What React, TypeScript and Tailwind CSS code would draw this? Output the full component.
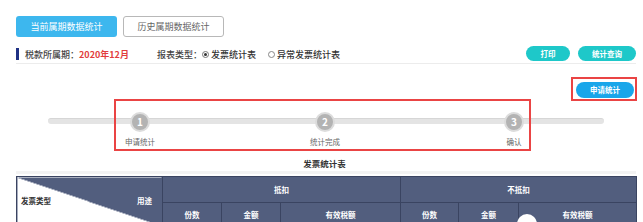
import React from "react";

const steps = [
  { n: 1, label: "申请统计", ml: "ml-[72px]" },
  { n: 2, label: "统计完成", ml: "ml-[145px]" },
  { n: 3, label: "确认", ml: "ml-[149px]" },
];

export default function App() {
  return (
    <div className="relative w-[643px] h-[222px] overflow-hidden bg-white font-['Noto_Sans_CJK_SC','Noto_Sans',sans-serif] text-[#333]">
      {/* Tabs */}
      <div className="flex gap-[6px] pl-[16px] pt-[16px]">
        <button className="w-[101px] h-[21px] rounded-[3px] bg-[#3db7ee] text-white text-[9px] leading-none">
          当前属期数据统计
        </button>
        <button className="w-[101px] h-[21px] rounded-[3px] border border-[#b8b8b8] bg-white text-[#666] text-[9px] leading-none">
          历史属期数据统计
        </button>
      </div>

      {/* Filter row */}
      <div className="mt-[8px] ml-[16px] mr-[7px] h-[19px] flex items-start border-b border-[#ececec] text-[9px] leading-[15px]">
        <span className="mt-[3px] w-[3px] h-[12px] bg-[#1f3184]" />
        <span className="ml-[6px] mt-[2px] font-medium text-[#444]">税款所属期：</span>
        <span className="mt-[2px] font-bold text-[#e23c3c]">2020年12月</span>
        <span className="ml-[28px] mt-[2px] font-medium text-[#444]">报表类型：</span>
        <span className="mt-[2px] flex items-center font-medium text-[#333]">
          <span className="w-[7px] h-[7px] rounded-full border border-[#777] flex items-center justify-center mr-[2px]">
            <span className="w-[3px] h-[3px] rounded-full bg-[#333]" />
          </span>
          发票统计表
        </span>
        <span className="ml-[12px] mt-[2px] flex items-center font-medium text-[#333]">
          <span className="w-[7px] h-[7px] rounded-full border border-[#888] mr-[2px]" />
          异常发票统计表
        </span>
        <div className="ml-auto flex gap-[8px] mt-[1px]">
          <button className="w-[44px] h-[15px] rounded-full bg-[#1ec8c9] text-white text-[7.5px] font-bold leading-none">
            打印
          </button>
          <button className="w-[58px] h-[15px] rounded-full bg-[#1ec8c9] text-white text-[7.5px] font-bold leading-none">
            统计查询
          </button>
        </div>
      </div>

      {/* Apply button */}
      <div className="flex justify-end mt-[13px] mr-[6px]">
        <div className="border-2 border-[#ea4444] pt-[3px] pb-[1px] pl-[3px] pr-[1px]">
          <button className="block w-[58px] h-[16px] rounded-full bg-[#19a6ea] text-white text-[7.5px] font-bold leading-none">
            申请统计
          </button>
        </div>
      </div>

      {/* Steps */}
      <div className="relative h-[51px] ml-[48px] w-[556px]">
        <div className="absolute left-0 right-0 top-[17px] h-[6px] rounded-full bg-[#e4e4e4] border-t border-[#d6d6d6]" />
        <div className="relative flex">
          {steps.map((s) => (
            <div key={s.n} className={`${s.ml} w-[40px] flex flex-col items-center pt-[11px]`}>
              <div className="w-[20px] h-[20px] rounded-full bg-[#b3b3b3] border-2 border-[#dcdcdc] flex items-center justify-center text-white text-[10px] font-bold leading-none">
                {s.n}
              </div>
              <div className="mt-[5px] text-[7.5px] leading-[10px] text-[#666] whitespace-nowrap">{s.label}</div>
            </div>
          ))}
        </div>
        <div className="absolute left-[66px] top-[-2px] w-[417px] h-[52px] border-2 border-[#ea4444]" />
      </div>

      {/* Title */}
      <div className="mt-[5px] pl-[6px] text-center text-[8.5px] font-bold leading-[12px] text-[#333]">发票统计表</div>
      <div className="mt-[2px] ml-[16px] mr-[7px] h-[3px] bg-[#f3f3f3]" />

      {/* Table */}
      <table className="mt-[2px] ml-[16px] w-[620px] border-collapse table-fixed text-[7.5px] font-bold text-white">
        <colgroup>
          <col className="w-[146px]" />
          <col className="w-[59px]" />
          <col className="w-[59px]" />
          <col className="w-[120px]" />
          <col className="w-[58px]" />
          <col className="w-[60px]" />
          <col className="w-[118px]" />
        </colgroup>
        <tbody>
          <tr className="h-[26px]">
            <td
              rowSpan={2}
              className="border border-[#3a4461] bg-[linear-gradient(to_top_right,#ffffff_50%,#525e7e_50%)] align-middle"
            >
              <div className="flex items-center justify-between px-[4px] -mt-[2px]">
                <span className="text-[#333]">发票类型</span>
                <span className="mr-[6px] text-white">用途</span>
              </div>
            </td>
            <td colSpan={3} className="border border-[#3a4461] bg-[#525e7e] text-center">抵扣</td>
            <td colSpan={3} className="border border-[#3a4461] bg-[#525e7e] text-center">不抵扣</td>
          </tr>
          <tr className="h-[24px]">
            <td className="border border-[#3a4461] bg-[#525e7e] text-center">份数</td>
            <td className="border border-[#3a4461] bg-[#525e7e] text-center">金额</td>
            <td className="border border-[#3a4461] bg-[#525e7e] text-center">有效税额</td>
            <td className="border border-[#3a4461] bg-[#525e7e] text-center">份数</td>
            <td className="border border-[#3a4461] bg-[#525e7e] text-center">金额</td>
            <td className="border border-[#3a4461] bg-[#525e7e] text-center">有效税额</td>
          </tr>
        </tbody>
      </table>

      {/* floating circle */}
      <div className="absolute left-[517px] top-[214px] w-[20px] h-[20px] rounded-full bg-white" />
    </div>
  );
}
